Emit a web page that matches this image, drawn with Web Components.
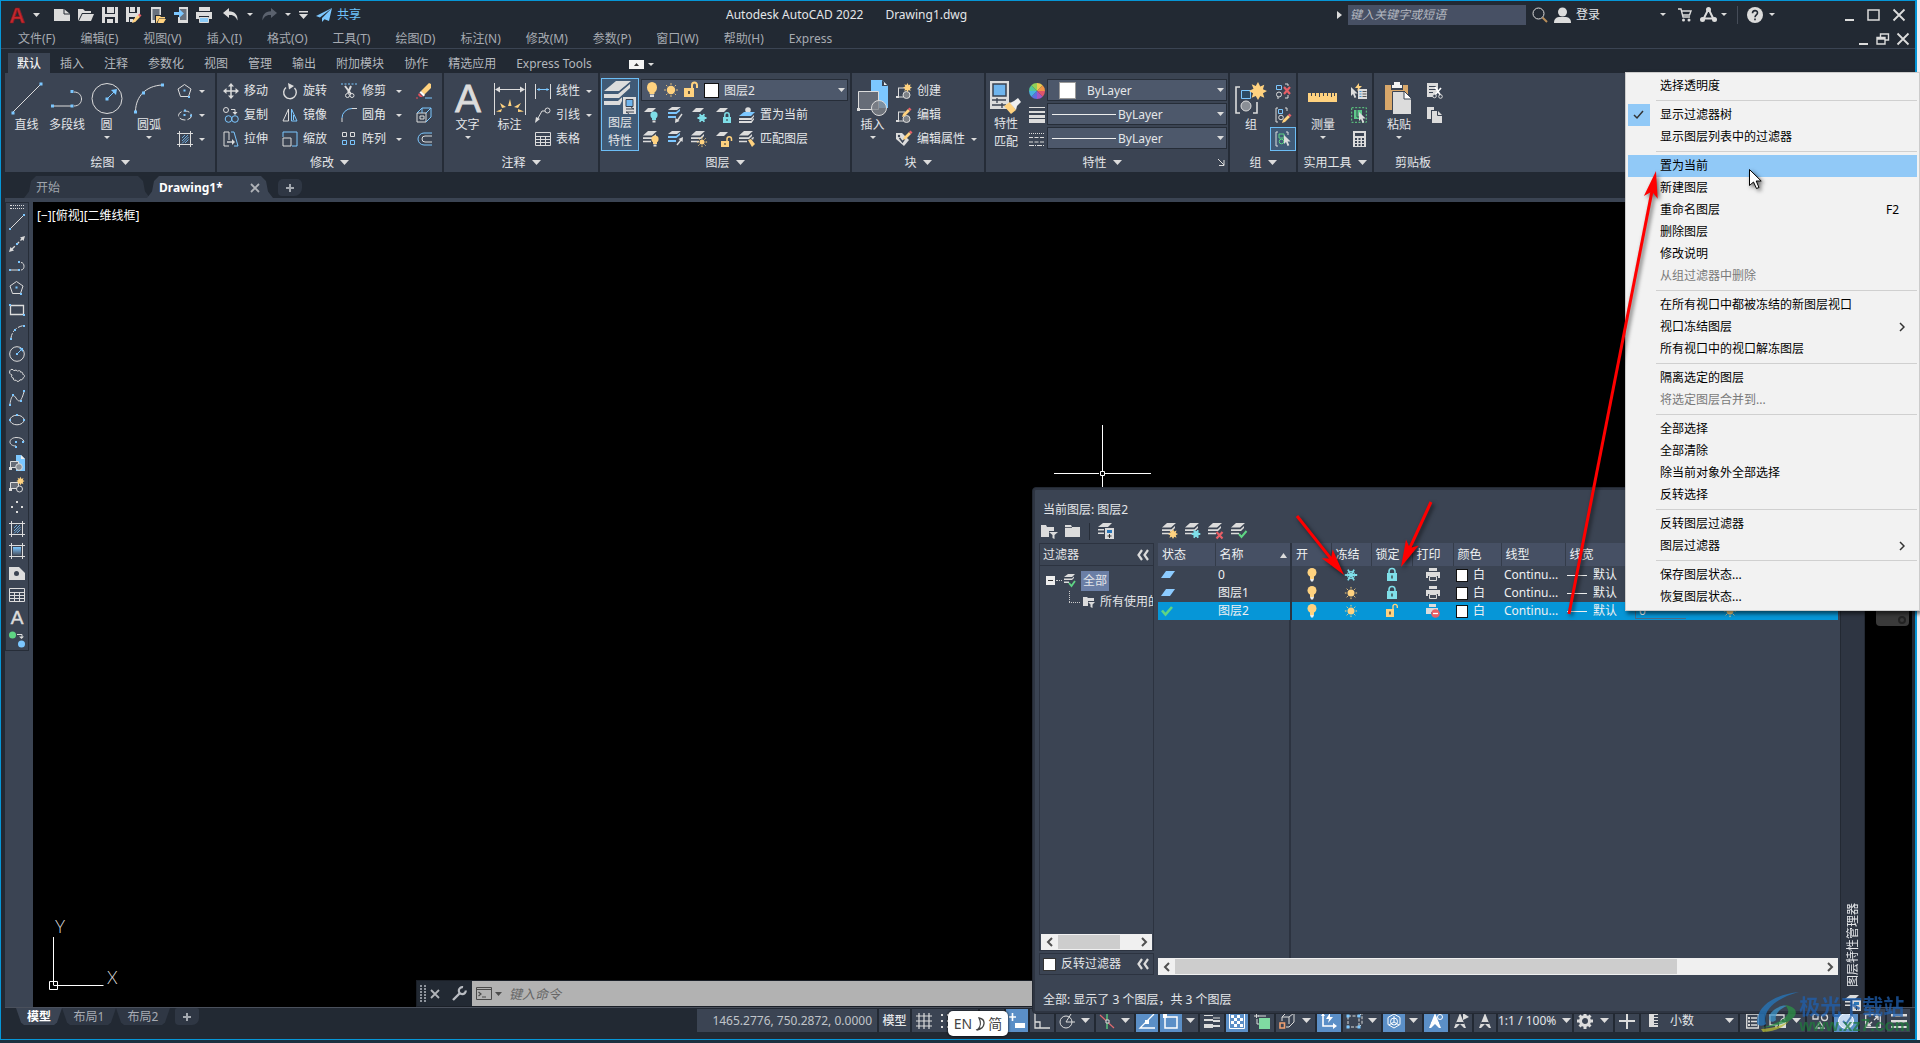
<!DOCTYPE html>
<html lang="zh-CN">
<head>
<meta charset="utf-8">
<title>Autodesk AutoCAD 2022 - Drawing1.dwg</title>
<style>
html,body{margin:0;height:100%}
body{
  --dark:#222933;--panel:#3b4453;--edge:#2a313d;--field:#4d586b;--blue:#0696d7;--accent:#7cc7ff;--on:#5b8fc7;--fg:#e4e6e9;--dim:#a7abb2;
  position:relative;overflow:hidden;background:#1d3040;color:var(--fg);
  font:12px/16px "Noto Sans","Noto Sans CJK SC",sans-serif;
}
</style>
</head>
<body>
<cad-app></cad-app>
<layer-palette></layer-palette>
<context-menu></context-menu>
<ime-badge></ime-badge>
<annotation-layer></annotation-layer>
<site-mark></site-mark>

<script>
const BASE = `:host,*{box-sizing:border-box}
button,input,select{font:inherit;color:inherit;background:none;border:0;padding:0;margin:0;outline:0;border-radius:0}
button{display:inline-flex;align-items:center;white-space:nowrap}
a{color:inherit;text-decoration:none}
select{appearance:none}`;

function define(name, css, html) {
  customElements.define(name, class extends HTMLElement {
    connectedCallback() {
      if (this.shadowRoot) return;
      const root = this.attachShadow({ mode: 'open' });
      root.innerHTML = `<style>${BASE}${css}</style>${html(this)}`;
    }
  });
}
const ic = (n, c = '') => `<cad-icon n="${n}"${c ? ` class="${c}"` : ''}></cad-icon>`;

/* ---------- icon set ---------- */
const stack = 'M5 0h9L9 4.500H0zM0 6.200h9.500L13 3v2L10 8H0zM0 9.700h8v1.600H0z';
const sq = (...p) => p.map(([x, y]) => `<rect class="B" x="${x - 1}" y="${y - 1}" width="2" height="2"/>`).join('');
const sq3 = (...p) => p.map(([x, y]) => `<rect class="B" x="${x - 1.5}" y="${y - 1.5}" width="3" height="3"/>`).join('');
const sunAt = (x, y, r) => `<circle class="Y" cx="${x}" cy="${y}" r="${r}"/><path class="y" d="${[0,45,90,135,180,225,270,315].map(a => { const c = Math.cos(a*Math.PI/180), s = Math.sin(a*Math.PI/180); return `M${(x+c*(r+1)).toFixed(1)} ${(y+s*(r+1)).toFixed(1)}L${(x+c*(r+2.6)).toFixed(1)} ${(y+s*(r+2.6)).toFixed(1)}`; }).join('')}"/>`;
const starAt = (x, y, r) => `<path class="Y" d="M${x} ${y-r}l${r*.25} ${r*.5} ${r*.45} ${-r*.2} ${-r*.15} ${r*.5} ${r*.45} ${r*.2} ${-r*.45} ${r*.25} ${r*.15} ${r*.5} ${-r*.45} ${-r*.2}L${x} ${y+r}l${-r*.25} ${-r*.45} ${-r*.45} ${r*.2} ${r*.15} ${-r*.5}L${x-r} ${y}l${r*.5} ${-r*.25} ${-r*.2} ${-r*.5} ${r*.45} ${r*.2}z"/>`;
const bulbAt = (x, y, c = 'Y') => `<circle class="${c}" cx="${x}" cy="${y}" r="3.6"/><path class="${c}" d="M${x-2} ${y+2}h4v3h-4z"/><path class="F" d="M${x-1.5} ${y+5.5}h3v2h-3z"/>`;
const flake = (x, y, r) => `<path class="c" stroke-width="1.800" d="M${x-r} ${y}h${2*r}M${x-r*.5} ${y-r*.87}l${r} ${r*1.74}M${x+r*.5} ${y-r*.87}l${-r} ${r*1.74}"/><circle class="c" cx="${x}" cy="${y}" r="${r*.6}"/>`;
const lockAt = (x, y, c = 'C', open = false) => `<path class="${c}" d="M${x} ${y+4}h8v6h-8z"/><path class="${c.toLowerCase()}" stroke-width="1.5" d="${open ? `M${x+6} ${y+4}v-2a2 2 0 0 1 4.500 0v2` : `M${x+1.8} ${y+4}v-2a2.200 2.200 0 0 1 4.400 0v2`}"/><path d="M${x+4} ${y+6}v2" stroke="#333"/>`;
const cursorAt = (x, y) => `<path class="F" d="M${x} ${y}v9l2-2 1.500 4 1.800-.8-1.700-3.800h3z"/>`;
const penAt = (x, y) => `<path class="Y" d="M${x} ${y+6}l5-5 2 2-5 5-3 1z"/><path class="R" d="M${x+5} ${y+1}l1.500-1.500 2 2L${x+7} ${y+3}z"/>`;
const I = {
  dd: [7,4,'<path class="F" d="M0 0h7L3.500 4z"/>'],
  dds: [6,3,'<path class="F" d="M0 0h6L3 3z"/>'],
  DD: [9,5,'<path class="F" d="M0 0h9L4.500 5z"/>'],
  tri: [5,8,'<path class="F" d="M0 0v8l5-4z"/>'],
  logo: [15,18,'<text x="-1" y="17" font-family="Liberation Sans" font-weight="700" font-size="22" fill="#c6282e" stroke="#7d1418" stroke-width=".6">A</text>'],
  new: [16,14,'<path class="F" d="M0 1h10l6 5v7H0z"/><path d="M10 1v5h6" stroke="#222933"/>'],
  open: [16,14,'<path class="F" d="M0 1h5l2 2h6v2H4L0 13z"/><path class="F" d="M4.500 6H16l-3 7H1z"/>'],
  save: [16,16,'<path class="F" d="M0 0h16v16H0z"/><path fill="#222933" stroke="none" d="M3 0h2v6h7V0h1v7H3zM3 10h10v6h-2v-4H9v4H3z"/><path class="F" d="M5 12h6v4H5z"/>'],
  saveas: [16,16,'<path class="F" d="M0 0h14v9l-5 6H0z"/><path fill="#222933" stroke="none" d="M3 0h8v6H3zM3 10h6v6H3z"/><path class="F" d="M4 0h5v5H4zM4 12h3v3H4z"/>'+penAt(7,7)],
  omob: [16,16,'<path class="F" d="M1 0h10v8H5v8H1z"/><path fill="#69717d" stroke="none" d="M2.500 2h7v6H5v5H2.500z"/><path class="Y" d="M6 9h4l1 1h4v1.500H9L6.500 16H6z"/><path class="Y" d="M9 12h7l-2.500 4H7.500z"/>'],
  smob: [14,16,'<path class="F" d="M5 0h9v16H4v-6h1zM5 0v3"/><path fill="#69717d" stroke="none" d="M6 2h6.500v11H6z"/><path class="B" d="M0 5h5V2l5 4.500-5 4.500V8H0z"/>'],
  print: [16,16,'<path class="F" d="M3 0h11v4H3zM0 5h16v7h-3v-3H3v3H0z"/><path fill="#8ccbf7" stroke="#dcdcdc" d="M3.500 10.500h9v5h-9z"/>'],
  undo: [16,13,'<path class="F" d="M6 0L0 5l6 5V7c5-.5 7 2 8.500 5.500C15 7 12 3.500 6 3.200z"/>'],
  redo: [16,13,'<path fill="#5a616d" stroke="none" d="M10 0l6 5-6 5V7c-5-.5-7 2-8.500 5.500C1 7 4 3.500 10 3.200z"/>'],
  more: [9,8,'<path class="F" d="M0 0h9v1.500H0zM0 3h9L4.500 8z"/>'],
  plane: [16,14,'<path class="B" d="M16 0L0 8l4 1.500zM16 0L6 10v4l2.500-2.800L13 13z"/>'],
  mag: [16,16,'<circle cx="6.500" cy="6.500" r="5.500" stroke="#dcdcdc"/><path stroke="#b88d5a" stroke-width="2" d="M10.500 10.500l4.500 4.500"/>'],
  user: [17,16,'<circle class="F" cx="8.500" cy="5" r="4.500"/><path class="F" d="M0 16c0-5 3-6 6-6h5c3 0 6 1 6 6z"/>'],
  cart: [14,14,'<path stroke-width="1.400" d="M0 1h3l2 8h7M4 3h9l-1.500 4H5"/><circle class="F" cx="5.500" cy="12" r="1.500"/><circle class="F" cx="11" cy="12" r="1.500"/>'],
  adsk: [17,15,'<path stroke-width="2" d="M8.500 2L3 13M8.500 2L14 13M3 11.500h11"/><circle class="F" cx="8.500" cy="2.500" r="2.500"/><circle class="F" cx="2.500" cy="12.500" r="2.500"/><circle class="F" cx="14.500" cy="12.500" r="2.500"/>'],
  help: [16,16,'<circle class="F" cx="8" cy="8" r="8"/><path stroke="#222933" stroke-width="1.600" d="M5.500 6.200C5.500 2.800 10.500 2.800 10.500 6c0 1.800-2.500 2-2.500 4.200M8 11.600v1.600"/>'],
  min: [10,14,'<path class="F" d="M0 11h9v2H0z"/>'],
  max: [13,12,'<path stroke-width="1.500" d="M1 1h11v10H1z"/>'],
  close: [14,14,'<path stroke-width="1.800" d="M1.500 1.500l11 11M12.500 1.500l-11 11"/>'],
  rest: [13,12,'<path stroke-width="1.400" d="M4.500 4V1h8v6h-3M1 4.500h8v6.500H1zM1 6h8"/>'],
  x: [10,10,'<path stroke="#b0b3b8" stroke-width="1.800" d="M1 1l8 8M9 1L1 9"/>'],
  plus: [10,10,'<path stroke="#a4a9b0" stroke-width="2" d="M5 1v8M1 5h8"/>'],
  mini: [15,9,'<path fill="#f4f4f4" stroke="none" d="M0 0h15v9H0z"/><path fill="#333" stroke="none" d="M5 6h5L7.500 3z"/>'],

  Line: [32,33,'<path d="M1.500 30.500l29-29"/>'+sq3([2,31],[30,2])],
  Pline: [32,33,'<path d="M2 24h19M23 10c10 0 10 14 0 14"/>'+sq3([1.5,24],[21,24],[21,9.500])],
  Circle: [32,33,'<circle cx="16" cy="16.500" r="15"/><path class="b" d="M16 17l8-8"/><path class="B" d="M26 7l-1 6-5-5z"/>'+sq3([16,17])],
  Arc: [32,33,'<path d="M2.500 29C3 14 13 4 29 3"/>'+sq3([2.5,30],[10.5,11],[29.500,3])],
  polygon: [16,16,'<path d="M7.500 1.500L14 6l-2.500 7.500H3.500L1 6z"/>'+sq([7.5,7.500],[12,14])],
  ellipse: [16,16,'<ellipse cx="8" cy="8.500" rx="6.500" ry="4.500" stroke-dasharray="6 2"/>'+sq([8,3.500],[14,8.500],[7.500,8])],
  hatch: [16,16,'<path d="M2.500 0v16M13.500 0v16M0 2.500h16M0 13.500h16"/><path class="b" stroke-width=".8" d="M5 7l3-3M5 10l6-6M5 12.500L11.500 6M8 12l3.500-3.500"/>'],
  move: [16,16,'<path stroke-width="1.500" d="M8 2v12M2 8h12"/><path class="F" d="M8 0l3 3.500H5zM8 16l3-3.500H5zM0 8l3.500-3v6zM16 8l-3.500-3v6z"/>'],
  rotate: [16,16,'<path stroke-width="1.400" d="M4 4.500A6.300 6.300 0 1 0 12.500 5"/><path class="F" d="M6 0l6 3-5 3.500z"/>'],
  trim: [16,16,'<path class="b" stroke-dasharray="2 1.500" d="M0 1h16"/><path stroke-width="2" d="M4 3l6 8M10 3L7 10"/><circle cx="6.500" cy="12.500" r="2"/><circle cx="11" cy="12.500" r="2"/>'],
  eraser: [16,16,'<path class="Y" d="M5 8l8-8 2 1v4l-7 7z"/><path fill="#fff" stroke="none" d="M5 8l4 4-1.500 1.500-4-4z"/><path fill="#e3505c" stroke="none" d="M3 10l4 4H4L2 12z"/><path class="b" d="M9 15h7"/><path stroke="#e3505c" d="M0 15h2"/>'],
  copy: [16,16,'<circle cx="3" cy="3" r="2.500"/><path d="M8 2.500h4v4"/><path class="F" d="M9.500 5h5L12 8z"/><circle class="b" cx="5.500" cy="12" r="3.300"/><circle class="b" cx="12" cy="12" r="3.300"/>'],
  mirror: [16,16,'<path d="M6.500 2v12H1z"/><path class="b" d="M9.500 2v12H15zM11.500 8v5"/>'],
  fillet: [16,16,'<path d="M1 15v-4M11 1.500h5"/><path class="b" d="M1 11A10 9.500 0 0 1 11 1.500"/>'],
  explode: [16,16,'<path d="M1 6h9v9H1zM4 9h4v3H4z"/><path class="b" d="M1 6l5-5h9l-5 5M15 1v9l-5 5M6 1v5M10 6l5-5"/>'],
  stretch: [16,16,'<path d="M6 15H1V1h5v8"/><path class="b" d="M8 1h3l4 14h-4"/><path stroke-width="1.400" d="M4 11h6"/><path class="F" d="M9 8l3 3-3 3z"/>'],
  scale: [16,16,'<path class="b" d="M1 6V1h14v14h-5"/><path d="M1 7h8v8H1z"/>'],
  array: [16,16,'<path d="M1.500 1.500h4v4h-4zM9.500 1.500h4v4h-4z"/><path class="b" d="M1.500 9.500h4v4h-4zM9.500 9.500h4v4h-4z"/>'],
  offset: [16,16,'<path class="b" d="M16 2H8a6 6 0 0 0 0 12h8"/><path d="M16 5H9a3 3 0 0 0 0 6h7"/>'],
  TextA: [28,33,'<text x="14" y="30" text-anchor="middle" font-family="Liberation Sans" font-size="39" fill="#dcdcdc" stroke="#dcdcdc" stroke-width=".8">A</text>'],
  Dim: [32,33,'<path d="M.5 1v32M31.500 1v32M2 7.500h28"/><path class="F" d="M1 7.500l5-3v6zM31 7.500l-5-3v6z"/><path class="Y" d="M14 24l2-7 1.500 7zM8 26l-2-5 6 4zM24 26l3-5-7 4zM7 30l-5-.5L8 27zM24 30l6-.5-6-2.500z"/>'],
  linear: [16,16,'<path d="M.5 1v15M15.500 1v15"/><path class="b" d="M2 6.500h12M4 5v3M12 5v3"/>'],
  leader: [16,16,'<circle cx="12.500" cy="3.500" r="2.500"/><path d="M10 4H7L2 13"/><path class="F" d="M0 16l1-6 4 2z"/>'],
  table: [16,16,'<path d="M.5 1.500h15v13H.5zM.5 5.500h15M.5 8.500h15M.5 11.500h15M5.500 5v10M10.500 5v10"/>'],
  LayerProp: [32,33,'<path class="F" d="M12 0h15L15 10H0zM0 13h14L26 3v4L15 17H0zM0 20h14l4-4v4l-2 4H0z"/><path stroke="#405a76" d="M0 11.500h14.500L26 2M0 18.500h14.500L22 12"/><path class="F" d="M19 16h13v17H19z"/><path fill="#6fb5ee" stroke="#3a4250" d="M22 18.500h7v7h-7z"/><path stroke="#3a4250" d="M22 28h8M27 26.500l3 1.500M22 31h8M22 31l3 1.500"/>'],
  bulb: [12,16,'<ellipse class="Y" cx="6" cy="5.500" rx="5" ry="5.500"/><path class="Y" d="M3.500 8h5v4h-5z"/><path class="F" d="M4 12.500h4v2.500H4z"/>'],
  sun: [16,16,sunAt(8,8,4.200)],
  unlock: [14,16,'<path class="Y" d="M0 6h10v9H0z"/><path class="y" stroke-width="2" d="M8 6V3a2.500 2.500 0 0 1 5 0v3"/><path stroke="#333" stroke-width="1.500" d="M5 9v3"/>'],
  lock: [12,14,'<path class="C" d="M1 5h10v8H1z"/><path class="c" stroke-width="1.600" d="M3 5V3.500a3 3 0 0 1 6 0V5"/><path stroke="#333" stroke-width="1.300" d="M6 7.500v3"/>'],
  unlocks: [12,14,'<path class="Y" d="M0 5h8v8H0z"/><path class="y" stroke-width="1.400" d="M7 5V2.500a2 2 0 0 1 4.300 0V4"/><path stroke="#333" stroke-width="1.300" d="M4 7.500v3"/>'],
  lOff: [16,16,'<path class="F" d="M5 1h8L9 5H1z"/>'+bulbAt(11,8,'C')],
  lIso: [16,16,`<path class="F" d="M5 0h9l-4 3H1z"/><path class="B" d="M1 5h8l4-3v2L9.500 7H1z"/><path class="B" d="M1 9h8v2H1z"/><path stroke-width="1.400" d="M15 7l-5 7"/><path class="F" d="M8 16l.5-5 4 3z"/>`],
  lFrz: [16,16,'<path class="F" d="M5 1h8L9 5H1z"/>'+flake(11,11,4.500)],
  lLock: [16,16,'<path class="F" d="M5 1h8L9 5H1z"/>'+lockAt(8,6)],
  lCur: [17,16,'<circle class="F" cx="9" cy="3" r="2.800"/><path class="B" d="M5 5h11l-4 4H0z"/><path class="F" d="M0 11h12l3-3v1.500L12.500 13H0zM0 14h12l3-3v1.500L12.500 16H0z"/>'],
  lOn: [16,16,`<path class="F" d="${stack}"/>`+bulbAt(12,8)],
  lUni: [16,16,`<path class="F" d="M5 0h9l-4 3H1z"/><path class="B" d="M1 5h8l4-3v2L9.500 7H1z"/><path class="B" d="M1 9h8v2H1z"/><path stroke-width="1.400" d="M10 14l4-5"/><path class="F" d="M16 6l-.5 5-4-3z"/>`],
  lThaw: [16,16,`<path class="F" d="${stack}"/>`+sunAt(11,11,2.500)],
  lUnl: [16,16,'<path class="F" d="M5 1h8L9 5H1z"/>'+lockAt(6,6,'Y',true)],
  lMatch: [16,16,`<path class="F" d="${stack}"/><path class="Y" d="M9 9l3-1 4 5-3 3z"/><path class="F" d="M12 7l3-1-1 3z"/>`],
  lNew: [16,16,`<path class="F" d="${stack}"/>`+starAt(11,11,5)],
  lVp: [16,16,`<path class="F" d="${stack}"/>`+flake(11,11,4.300)],
  lDel: [16,16,`<path class="F" d="${stack}"/><path stroke="#e85f66" stroke-width="2.200" d="M8.500 9l6 6.500M14.500 9l-6 6.500"/>`],
  lSet: [16,16,`<path class="F" d="${stack}"/><path class="g" stroke-width="2" d="M8 11l2.500 3 5-6"/>`],
  Insert: [32,36,'<path class="B" d="M14 0h11l6 6v22H14z"/><path fill="#3b4453" stroke="none" d="M25 0v6h6z"/><path fill="#eee" stroke="none" d="M27 2v3h3z"/><path fill="#666c77" stroke="#dcdcdc" d="M1.500 11.500h20v18h-20z"/><circle fill="#7d8187" fill-opacity=".8" cx="22" cy="28" r="7.500"/>'+'<path class="F" d="M0 28h3v3H0z"/>'],
  create: [16,16,'<path d="M2 5h7M2.500 5v9h5"/><circle fill="#7d8187" cx="10.500" cy="12" r="3.500"/><path class="F" d="M0 13h3v2H0z"/>'+starAt(11.5,4.500,4.500)],
  editb: [16,16,'<path d="M2 5h7M2.500 5v9h5"/><circle fill="#7d8187" cx="10.500" cy="12" r="3.500"/><path class="F" d="M0 13h3v2H0z"/>'+penAt(7,1)],
  attr: [16,16,'<path class="F" d="M0 2h6l7 7-5 6L0 8z"/><circle fill="#3b4453" stroke="none" cx="3" cy="5" r="1.200"/><path stroke="#3b4453" stroke-width="1.500" d="M3.500 7l3 4 4-6"/>'+penAt(8,0)],
  MatchProp: [32,33,'<path class="F" d="M0 0h19v28H0z"/><path fill="#6fb5ee" stroke="#3a4250" stroke-width="1.500" d="M3 3h13v12H3z"/><path stroke="#3a4250" stroke-width="1.300" d="M2 19h14M7 17v5M2 24h14M12 22v5"/><path class="Y" d="M14 25l6-4 6 8-5 4z"/><path fill="#eee" stroke="none" d="M20 22l4-2 4-3 3 4-4 4-1 4z"/>'],
  wheel: [16,16,'<g stroke="none"><path fill="#e9c84f" d="M8 8V0a8 8 0 0 1 5.700 2.300z"/><path fill="#ef9447" d="M8 8l5.700-5.700A8 8 0 0 1 16 8z"/><path fill="#e0556a" d="M8 8h8a8 8 0 0 1-2.300 5.700z"/><path fill="#a456c4" d="M8 8l5.700 5.700A8 8 0 0 1 8 16z"/><path fill="#5d6fe0" d="M8 8v8a8 8 0 0 1-5.700-2.300z"/><path fill="#48b0e0" d="M8 8l-5.700 5.700A8 8 0 0 1 0 8z"/><path fill="#53c796" d="M8 8H0a8 8 0 0 1 2.300-5.700z"/><path fill="#8fd057" d="M8 8L2.300 2.300A8 8 0 0 1 8 0z"/></g>'],
  lws: [16,16,'<path class="F" d="M0 0h16v1H0zM0 4h16v2H0zM0 8h16v3H0zM0 12h16v4H0z"/>'],
  lts: [16,16,'<path d="M0 2.500h16" stroke-dasharray="1 1"/><path d="M0 6.500h16M0 11h16" stroke-dasharray="4 1.500"/><path d="M0 14.500h16" stroke-dasharray="5 1 1 1"/>'],
  launch: [7,7,'<path d="M0 0l6 6M6 1v5.500H1"/>'],
  Group: [32,33,'<path stroke-width="1.600" d="M5 5H1v26h4M18 31h4V20"/><path class="b" d="M6.500 8.500h9v8h-9z" fill="#2d4a63"/><circle fill="#8a8f96" cx="11" cy="24" r="5"/>'+starAt(23,9,9)],
  ungrp: [16,16,'<path d="M10 1h3v2M10 15h3v-3M4 15H2"/><path class="b" d="M1.500 2.500h5v4h-5z"/><circle cx="4" cy="11.500" r="2.500"/><path stroke="#e85f66" stroke-width="2.200" d="M9 4l6 7M15 4l-6 7"/>'],
  grped: [16,16,'<path d="M3 1H1v14h2M10 1h2v3"/><path class="b" d="M3.500 2.500h4v4h-4z"/><circle cx="6" cy="10.500" r="2.300"/>'+penAt(8,7)],
  grpsel: [16,16,'<path d="M3 1H1v14h2M11 1h2v3"/><path class="g" d="M4 3h5v4H4z"/><circle class="g" cx="6.500" cy="10.500" r="2.300"/>'+cursorAt(9,4)],
  Measure: [30,10,'<path class="Y" d="M0 0h29v9H0z"/><path stroke="#3b4453" d="M3.500 0v3M7.500 0v3M11.500 0v4M15.500 0v3M19.500 0v3M23.500 0v4M26.500 0v3"/>'],
  qsel: [16,16,'<path class="F" d="M7 6h9v10H7z"/><path stroke="#3f8fd0" d="M8.500 8.500h2M8.500 11h2M8.500 13.500h2"/><path stroke="#555" d="M11.500 8.500h4M11.500 11h4M11.500 13.500h4"/><path class="Y" d="M8 0L4 5h3L6 8l5-5H8z"/>'+cursorAt(0,4)],
  selall: [16,16,'<path class="g" stroke-dasharray="2 1.500" d="M.7.7h14.600v14.600H.7z"/><path fill="#5ec98a" stroke="none" d="M3 3h8v9H3z"/><path stroke="#3b4453" d="M6 3v7h6"/>'+cursorAt(8,5)],
  calc: [13,16,'<path class="F" d="M0 0h13v16H0z"/><path fill="#3b4453" stroke="none" d="M2 2h9v3H2zM2 7h2v2H2zM5.500 7h2v2h-2zM9 7h2v2H9zM2 10h2v2H2zM5.500 10h2v2h-2zM9 10h2v2H9zM2 13h2v2H2zM5.500 13h2v2h-2zM9 13h2v2H9z"/>'],
  Paste: [28,33,'<path fill="#d8a76a" stroke="none" d="M0 3h23v25H0z"/><path fill="#3b4453" stroke="none" d="M6 2h12v6H6z"/><path fill="#f4f4f4" stroke="none" d="M7 3h2V0h6v3h2v3H7z"/><path fill="#dcdcdc" stroke="#3b4453" d="M7.500 9.500h12l7 7v16h-19z"/><path fill="#fff" stroke="#3b4453" d="M19 9l8 8h-8z"/>'],
  cut: [16,16,'<path class="F" d="M0 0h11v7l-4 7H0z"/><path stroke="#3b4453" d="M2 3.500h7M2 6.500h7M2 9.500h4"/><path stroke-width="1.600" stroke="#fff" d="M8 4l6 9M14 5l-7 8"/><circle fill="#3b4453" cx="7.500" cy="13" r="1.800"/><circle fill="#3b4453" cx="13.500" cy="13.500" r="1.800"/>'],
  copyc: [16,16,'<path class="F" d="M0 0h7v3H4v9H0z"/><path class="F" d="M5 4h6l4 4v8H5z"/><path stroke="#3b4453" d="M10.500 4v4.500H15"/>'],

  pLine: [16,16,'<path d="M2 14L14 2"/>'+sq([1,15],[15,1])],
  pXl: [16,16,'<path stroke-width="1.300" d="M3 13L13 3" stroke-dasharray="4 2"/><path class="F" d="M0 16l1.500-5 3.500 3.500zM16 0l-5 1.500L14.500 5z"/>'+sq([8,8])],
  pPl: [16,16,'<path d="M2 12h8M12 4.500c4 0 4 7.500 0 7.500"/>'+sq([1,12],[10,12],[10,4])],
  pRect: [16,16,'<path stroke-width="1.300" d="M1.500 3.500h13v9h-13z"/>'+sq([1,3],[15,13])],
  pArc: [16,16,'<path d="M2 14C3 7 8 2.500 15 1.500" stroke-dasharray="5 1.500"/>'+sq([2,15],[6,6],[15,2])],
  pCir: [16,16,'<circle cx="8" cy="8" r="7.300"/><path class="b" d="M9 7l4-4"/><path class="B" d="M14 2v4l-4-4z"/>'+sq([8,8])],
  pCloud: [16,16,'<path d="M1 2.500C2 .8 4 1 5 2.800 6 1.800 8 2 8.500 3.200 10 2.200 11.800 2.600 11.600 4.200 13.500 3.800 14 5 13.600 6.200 16 6.500 16 9.500 14 9.800 14 11.600 12.500 12.200 11 11.800 10.500 13.800 7.800 14 7 12.200 5 12.800 3.800 11.500 4.400 10 2.300 9.800 1.800 8 3.200 7 .8 6.500 0 4.500 1 2.500z"/>'],
  pSpl: [16,16,'<path d="M1 14c1-7 3-11 6-6s5 4 8-6"/>'+sq([1,15],[4,5],[12,11],[15,1])],
  pEl: [16,16,'<ellipse cx="8" cy="8" rx="7" ry="4.800"/>'+sq([8,3],[1,8],[15,8])],
  pElA: [16,16,'<path d="M7 12C-1 12-1 4 7 3.500c4 0 7 1 8 4"/>'+sq([7,8],[14,8],[7,13])],
  pIns: [16,16,'<path class="B" d="M7 0h5l4 4v12H7z"/><path fill="#eee" stroke="none" d="M12 0v4h4z"/><path fill="#666c77" d="M1.500 6.500h8v6h-8z"/><circle fill="#8a8f96" cx="10" cy="12" r="3.300"/><path class="F" d="M0 12h3v3H0z"/>'],
  pBlk: [16,16,'<path fill="#666c77" d="M1.500 5.500h8v6h-8z"/><circle fill="#3b4453" cx="10.500" cy="12" r="3"/><path class="F" d="M0 11h3v3H0z"/>'+starAt(11.5,4,4.200)],
  pPt: [16,16,'<path class="F" d="M7 2h2v2H7zM2 7h2v2H2zM12 7h2v2h-2zM7 12h2v2H7z"/>'],
  pGrad: [16,16,'<defs><linearGradient id="g" x1="0" y1="0" x2="0" y2="1"><stop offset="0" stop-color="#7cc7ff"/><stop offset="1" stop-color="#4a5464"/></linearGradient></defs><path d="M2.500 0v16M13.500 0v16M0 2.500h16M0 13.500h16"/><path fill="url(#g)" stroke="none" d="M4 4h8v8H4z"/>'],
  pReg: [16,14,'<path class="F" d="M0 1h10l6 6v7H0z"/><circle fill="#3b4453" stroke="none" cx="7.500" cy="7.500" r="2.500"/>'],
  pTxt: [16,16,'<text x="8" y="15" text-anchor="middle" font-family="Liberation Sans" font-size="19" fill="#dcdcdc" stroke="#dcdcdc" stroke-width=".5">A</text>'],
  pAdd: [16,16,'<circle fill="#5fd584" stroke="none" cx="3.500" cy="4" r="3.500"/><circle class="B" cx="12.500" cy="13" r="3.500"/><path d="M8 3.500h5v3"/><path class="F" d="M10 5.500h5L12.500 8z"/>'],

  fNewP: [17,16,'<path class="F" d="M0 2h5l1 2h7v4H8v6H0z"/><path class="F" d="M8 9h9l-3.500 3v4l-2-1v-3z"/>'],
  fGrp: [16,14,'<path class="F" d="M0 1h6l1 2h8v10H0z"/><path stroke="#3b4453" stroke-width=".8" d="M0 3.500h7"/>'],
  fSt: [16,16,'<path class="F" d="M5 0h9l-4 4H0zM0 6h6v1.500H0zM0 9.500h6V11H0z"/><path class="F" d="M7 5h9v11H7z"/><path fill="#2b77b8" stroke="none" d="M9 7h5v3H9z"/><path stroke="#333" d="M9.500 13h4M11.500 11v4"/>'],
  dbl: [12,10,'<path stroke-width="2.200" d="M5 0L1.500 5 5 10M11 0L7.500 5 11 10"/>'],
  minus: [9,9,'<path fill="#eee" stroke="none" d="M0 0h9v9H0z"/><path stroke="#333" d="M2 4.500h5"/>'],
  tLay: [12,14,'<path class="F" d="M4 0h7L8 3H0zM0 4.500h8l2-2V4L8 6H0zM0 7.500h5V9H0z"/><path class="g" stroke-width="1.800" d="M5 9l2.500 3L11 7"/>'],
  tFil: [12,12,'<path class="F" d="M0 1h4l1 1h6v3H5v5H0z"/><path class="F" d="M5 6h7L9.500 8.500V12l-2-1V8.500z"/>'],
  elbow: [12,21,'<path stroke="#ccc" stroke-dasharray="1 1" d="M.5 0v11M0 11.500h12"/>'],
  sheet: [14,8,'<path fill="#8ccbff" stroke="none" d="M5 0h9L9 7H0z"/>'],
  chk: [12,10,'<path class="g" stroke-width="2.600" d="M1 4.500L4.500 8.500 11 1"/>'],
  cbulb: [10,14,'<circle class="Y" cx="5" cy="4.500" r="4.500"/><path class="Y" d="M3 7h4v4H3z"/><path fill="#eee" stroke="none" d="M3 11h4l-1 2.500H4z"/>'],
  csun: [14,14,sunAt(7,7,3.500)],
  cfrz: [14,14,flake(7,7,6.200)],
  cprn: [14,14,'<path class="F" d="M3 0h8v3H3zM0 4h14v6h-2V8H2v2H0z"/><path fill="#444c59" stroke="#dcdcdc" d="M3.500 8.500h7v4h-7z"/>'],
  cnop: [14,14,'<path class="F" d="M3 0h7v3H3zM0 4h12v4H5v2H0z"/><circle fill="#e85f66" stroke="none" cx="9.500" cy="9.500" r="4.300"/><path stroke="#fff" stroke-width="1.300" d="M7 9.500h5"/>'],
  up: [7,5,'<path class="F" d="M0 5h7L3.500 0z"/>'],
  sL: [8,10,'<path stroke="#505050" stroke-width="2" d="M6 1L2 5l4 4"/>'],
  sR: [8,10,'<path stroke="#505050" stroke-width="2" d="M2 1l4 4-4 4"/>'],
  grip: [6,18,'<path stroke="#8f949c" stroke-width="2" stroke-dasharray="2 1" d="M1 0v18M5 0v18"/>'],
  wrench: [15,15,'<path stroke="#b9bcc2" stroke-width="2.400" d="M1 14l7-7"/><path stroke="#b9bcc2" stroke-width="2.200" d="M11 1.200A3.500 3.500 0 1 0 13.800 4.500"/>'],
  term: [16,13,'<path stroke="#4a4a4a" d="M.5.5h15v12H.5zM.5 2.500h15"/><path stroke="#4a4a4a" stroke-width="1.200" d="M2.500 5l2.500 2-2.500 2M6 10h4"/>'],

  sGrid: [16,16,'<path stroke-width="1.200" d="M3 0v16M8 0v16M13 0v16M0 3h16M0 8h16M0 13h16"/>'],
  sSnap: [16,16,'<path stroke-width="2" stroke-dasharray="2 4" d="M1 1v16M7 1v16M13 1v16"/>'],
  sDyn: [16,16,'<path stroke="#fff" stroke-width="1.600" d="M0 4h7M3.500 0v8"/><path fill="#fff" stroke="none" d="M6 10h10v5H6z"/>'],
  sOrt: [16,16,'<path stroke-width="1.300" d="M1 0v15h15M1 9h5v6"/>'],
  sPol: [16,16,'<circle cx="7" cy="9" r="6"/><path d="M7 9h9M7 9l5-8"/>'],
  sIso: [16,16,'<path stroke="#e06b70" stroke-width="1.200" d="M1 2l14 13"/><path class="g" stroke-width="1.300" d="M8 0v16"/><path fill="#3b4453" d="M7 7h3v3H7z"/>'],
  sOtr: [16,16,'<path stroke="#fff" stroke-width="1.300" d="M15 1L1 15h15"/><path fill="#fff" stroke="none" d="M6 7h4v4H6z"/>'],
  sOsn: [16,16,'<path stroke="#fff" stroke-width="1.500" d="M2 4h12v11H2z"/><path fill="#fff" stroke="none" d="M0 1h4v4H0z"/>'],
  sLw: [16,16,'<path d="M0 2.500h9M9 5h7"/><path class="F" d="M0 6h9v2H0zM9 7h7v2H9zM0 11h9v4H0zM9 12h7v2H9z"/>'],
  sTr: [16,16,'<path stroke="#fff" d="M.5.5h15v15H.5z"/><path fill="#fff" stroke="none" d="M2 2h3v3H2zM8 2h3v3H8zM5 5h3v3H5zM11 5h3v3h-3zM2 8h3v3H2zM8 8h3v3H8zM5 11h3v3H5zM11 11h3v3h-3z"/>'],
  sCyc: [16,16,'<path d="M0 3h5M2.500 1v4M3 6v5h3M4 3h8"/><path fill="#7fdba2" stroke="none" d="M5 5h11v11H5z"/>'],
  s3d: [16,16,'<path d="M3 8V4l4-4h8v9l-5 5H7M3 4h7v7M10 4l5-4"/><path stroke="#f0a070" stroke-width="1.600" d="M1 10h4.500v5H1z"/>'],
  sUcs: [16,16,'<path stroke="#fff" stroke-width="1.600" d="M2 1v12h11"/><path fill="#fff" stroke="none" d="M2 0L0 3h4zM16 13l-4-3v6z"/><path fill="#fff" stroke="none" d="M9 0L5 6h3L7 10l5-6H9z"/>'],
  sFil: [16,16,'<path stroke-dasharray="3 1.500" d="M2 3h11v11H2zM13 3l3-3M13 14l3-3V1"/>'+sq3([2,3],[13,3],[2,14],[13,14])],
  sGiz: [16,16,'<path stroke="#fff" d="M8 1l6 3.500v7L8 15l-6-3.500v-7z"/><path stroke="#fff" d="M8 3v6M8 9l-5 3M8 9l5 3"/><circle stroke="#fff" cx="8" cy="8.500" r="3.500"/>'],
  sAn1: [16,16,'<path fill="#fff" stroke="none" d="M7 0L1 15h2l4-4 4 4h2L9 5z"/><path stroke="#fff" d="M3 10l4-3 4 3"/><circle stroke="#fff" cx="12" cy="4" r="2.500"/>'],
  sAn2: [16,16,'<path class="F" d="M7 0L1 15h2l4-4 4 4h2L9 5zM3 9h8v2H3zM10 0l6 4-6 3z"/>'],
  sAn3: [16,16,'<path class="F" d="M8 0L2 15h2l4-4 4 4h2L10 5zM4 9h8v2H4z"/>'],
  sGear: [16,16,'<circle cx="8" cy="8" r="4.500" stroke-width="3"/><path stroke-width="3" d="M8 0v3M8 13v3M0 8h3M13 8h3M2.500 2.500l2 2M11.500 11.500l2 2M13.500 2.500l-2 2M4.500 11.500l-2 2"/>'],
  sPlus: [16,16,'<path stroke-width="2" d="M8 0v16M0 8h16"/>'],
  sUnit: [9,16,'<path class="F" d="M0 0h9v2H5v1h4v1H5v2h4v1H5v2h4v1H5v2h4v1H5v1h4v2H0z"/>'],
  sQp: [13,16,'<path stroke-width="1.300" d="M.7 1h11.600v14H.7zM5 5h6M5 8.500h6M5 12h6"/><path class="F" d="M2 4h2v2H2zM2 7.500h2v2H2zM2 11h2v2H2z"/>'],
  sLui: [17,16,'<path stroke-width="1.300" d="M9 12H1V2h14v4M7 12v3"/><path class="F" d="M10 9h7v6h-7z"/><path d="M12 9V7.500a2 2 0 0 1 4 0"/>'],
  sIsoO: [16,16,'<path stroke-width="1.300" d="M1 1h5v5H1zM8 9l4 6H4z"/><circle stroke-width="1.300" cx="12.500" cy="4.500" r="3"/>'],
  sHw: [16,16,'<circle fill="#c7daf0" stroke="#fff" cx="8" cy="8" r="7.500"/><path stroke="#4d7fb5" stroke-width="2" d="M5 8l3 3 5-7"/>'],
  sFull: [16,14,'<path stroke-width="1.300" d="M.7.7h14.600v12.600H.7zM9 6l4-3.500M10 2.500h3V6M7 8l-4 3.500M6 11.500H3V8"/>'],
  sMenu: [16,14,'<path class="F" d="M0 0h16v2.500H0zM0 6h16v2.500H0zM0 12h16v2H0z"/>']
};
define('cad-icon', `:host{display:inline-flex;flex:none}svg{display:block;fill:none;stroke:#dcdcdc;overflow:visible}
.F{fill:#dcdcdc;stroke:none}.B{fill:#7cc7ff;stroke:none}.Y{fill:#ffd27f;stroke:none}.C{fill:#7fdfe9;stroke:none}.R{fill:#e85f66;stroke:none}
.b{stroke:#7cc7ff}.y{stroke:#ffd27f}.c{stroke:#7fdfe9}.g{stroke:#5fd584}`, e => {
  const [w, h, s] = I[e.getAttribute('n')];
  return `<svg width="${w}" height="${h}" viewBox="0 0 ${w} ${h}" aria-hidden="true">${s}</svg>`;
});

/* ---------- title bar ---------- */
define('title-bar', `:host{display:flex;height:27px;align-items:center;padding-right:9px}
.quick{display:flex;align-items:center;width:725px;padding-left:9px;gap:8px}
.quick .new{margin-left:6px}.quick .undo{margin-left:3px}.share{color:#6fc3fa;gap:5px}
.t{margin-right:22px;white-space:nowrap}
.right{display:flex;align-items:center;margin-left:auto}
.search{width:178px;height:20px;background:#475064;padding-left:2px;margin:0 6px;font-style:italic}
.search::placeholder{color:#b4b8c0;opacity:1}
.login{gap:5px;margin-left:6px}.a{margin-left:60px}.b{margin-left:12px}.c{margin:0 4px 0 8px}
.sep{width:1px;height:18px;background:#454c58;margin:0 9px 0 10px}.d{margin-left:6px}
.win{display:flex;gap:12px;align-items:center;margin-left:70px}`,
() => `<div class="quick"><button aria-label="应用程序菜单">${ic('logo')}</button>${ic('dd')}
<button class="new" aria-label="新建">${ic('new')}</button><button aria-label="打开">${ic('open')}</button><button aria-label="保存">${ic('save')}</button><button aria-label="另存为">${ic('saveas')}</button><button aria-label="从移动设备打开">${ic('omob')}</button><button aria-label="保存到移动设备">${ic('smob')}</button><button aria-label="打印">${ic('print')}</button>
<button class="undo" aria-label="放弃">${ic('undo')}</button>${ic('dds')}<button aria-label="重做">${ic('redo')}</button>${ic('dds')}<button aria-label="自定义">${ic('more')}</button><button class="share">${ic('plane')}<span>共享</span></button></div>
<span class="t">Autodesk AutoCAD 2022</span><span class="t">Drawing1.dwg</span>
<div class="right">${ic('tri')}<input class="search" aria-label="搜索" placeholder="键入关键字或短语"><button aria-label="查找">${ic('mag')}</button>
<button class="login">${ic('user')}<span>登录</span></button>${ic('dds','a')}<button class="b" aria-label="商店">${ic('cart')}</button><button class="c" aria-label="应用">${ic('adsk')}</button>${ic('dds')}<span class="sep"></span><button aria-label="帮助">${ic('help')}</button>${ic('dds','d')}
<div class="win"><button aria-label="最小化">${ic('min')}</button><button aria-label="最大化">${ic('max')}</button><button aria-label="关闭">${ic('close')}</button></div></div>`);

define('menu-bar', `:host{display:flex;height:21px;align-items:center;padding:1px 5px 0 4px;border-bottom:1px solid #3b4453;color:var(--dim)}
nav{display:flex}a{padding:0 12px 0 13px}.win{margin-left:auto;display:flex;gap:7px;align-items:center}`,
() => `<nav>${['文件(F)','编辑(E)','视图(V)','插入(I)','格式(O)','工具(T)','绘图(D)','标注(N)','修改(M)','参数(P)','窗口(W)','帮助(H)','Express'].map(t => `<a href="#">${t}</a>`).join('')}</nav>
<div class="win"><button aria-label="最小化图形">${ic('min')}</button><button aria-label="还原图形">${ic('rest')}</button><button aria-label="关闭图形">${ic('close')}</button></div>`);

define('ribbon-tabs', `:host{display:flex;height:24px;align-items:flex-end;padding-left:7px;color:#b3b7bd}
button{height:20px;padding:2px 10px 0}.on{background:var(--panel);color:#f2f2f2;font-weight:500;padding:2px 9px 0}.m{gap:4px;padding-left:27px}`,
() => ['默认','插入','注释','参数化','视图','管理','输出','附加模块','协作','精选应用','Express Tools'].map((t, i) => `<button${i ? '' : ' class="on"'}>${t}</button>`).join('') + `<button class="m" aria-label="最小化功能区">${ic('mini')}${ic('dds')}</button>`);

/* ---------- ribbon ---------- */
define('ribbon-panel', `:host{display:flex;flex-direction:column;border-right:2px solid #252c37;height:99px}
.body{display:flex;height:79px;padding-top:6px}footer{display:flex;align-items:center;justify-content:center;gap:6px;height:20px;padding-top:1px}
footer .l{margin-left:auto;margin-right:3px}.off{margin-left:auto}`,
e => `<div class="body"><slot></slot></div><footer>${e.hasAttribute('launcher') ? '<span class="off"></span>' : ''}<span>${e.getAttribute('label')}</span>${e.hasAttribute('plain') ? '' : ic('DD')}${e.hasAttribute('launcher') ? ic('launch','l') : ''}</footer>`);

define('big-button', `:host{display:block;flex:none}button{flex-direction:column;width:100%;height:72px;padding-top:1px}
.i{height:36px;display:flex;align-items:center}
.t{line-height:18px}cad-icon.dd{margin-top:2px}
:host([active]) button{background:#405a76;border:1px solid #6cbdf5;height:73px;margin-top:-1px}`,
e => `<button><span class="i">${ic(e.getAttribute('icon'))}</span>${e.getAttribute('label').split('|').map(t => `<span class="t">${t}</span>`).join('')}${e.hasAttribute('arrow') ? ic('dds','dd') : ''}</button>`);

define('tool-button', `:host{display:flex;height:24px;align-items:center}button{gap:5px;height:22px;min-width:16px}
.i{width:16px;display:flex;justify-content:center}cad-icon.dd{margin-left:10px}:host([tight]) cad-icon.dd{margin-left:6px}
:host([active]) button{background:#405a76;outline:1px solid #6cbdf5;padding:0 4px;margin:0 -4px}`,
e => `<button aria-label="${e.getAttribute('label') || e.getAttribute('icon')}"><span class="i">${ic(e.getAttribute('icon'))}</span>${e.hasAttribute('label') ? `<span>${e.getAttribute('label')}</span>` : ''}</button>${e.hasAttribute('arrow') ? ic('dds','dd') : ''}`);

define('combo-box', `:host{display:flex;height:22px;margin-bottom:2px;background:var(--field);border:1px solid #262d38;align-items:center;padding:0 2px 0 4px}
select{flex:1;height:20px;min-width:0;padding-top:1px}`,
e => `<slot></slot><select aria-label="${e.getAttribute('name')}"><option>${e.getAttribute('value')}</option></select>${ic('dd')}`);

const tool = (i, l, x = '') => `<tool-button icon="${i}"${l ? ` label="${l}"` : ''} ${x}></tool-button>`;
define('cad-ribbon', `:host{display:flex;background:var(--panel);margin-left:4px;height:99px}
.c{display:grid;grid-auto-rows:24px;align-content:start}.mod{grid-template-columns:59px 59px 75px 16px;padding-left:6px}
.lay{display:flex;flex-direction:column;padding-left:2px}.row{display:flex;gap:8px;padding-left:2px;height:24px}
.swatch{width:15px;height:15px;background:#fff;border:1px solid #111;margin:0 5px 0 6px}.layer{display:flex;align-items:center;gap:5px}
.sw{width:17px;height:17px;background:#fff;border:1px solid #999;margin:0 11px 0 7px}.ln{width:64px;height:1px;background:#eee;margin-right:2px}
.combos{display:flex;flex-direction:column;width:180px}`,
() => `
<ribbon-panel label="绘图" style="width:212px"><big-button icon="Line" label="直线" style="width:43px"></big-button><big-button icon="Pline" label="多段线" style="width:38px"></big-button><big-button icon="Circle" label="圆" arrow style="width:41px"></big-button><big-button icon="Arc" label="圆弧" arrow style="width:44px"></big-button>
<div class="c" style="padding-left:6px">${tool('polygon','','arrow tight')}${tool('ellipse','','arrow tight')}${tool('hatch','','arrow tight')}</div></ribbon-panel>
<ribbon-panel label="修改" style="width:227px"><div class="c mod">${tool('move','移动')}${tool('rotate','旋转')}${tool('trim','修剪','arrow')}${tool('eraser')}${tool('copy','复制')}${tool('mirror','镜像')}${tool('fillet','圆角','arrow')}${tool('explode')}${tool('stretch','拉伸')}${tool('scale','缩放')}${tool('array','阵列','arrow')}${tool('offset')}</div></ribbon-panel>
<ribbon-panel label="注释" style="width:156px"><big-button icon="TextA" label="文字" arrow style="width:47px"></big-button><big-button icon="Dim" label="标注" style="width:37px"></big-button><div class="c" style="padding-left:7px">${tool('linear','线性','arrow tight')}${tool('leader','引线','arrow tight')}${tool('table','表格')}</div></ribbon-panel>
<ribbon-panel label="图层" style="width:252px"><big-button icon="LayerProp" label="图层|特性" active style="width:38px;margin-left:1px"></big-button>
<div class="lay"><combo-box name="图层" value="图层2" style="width:207px"><span class="layer">${ic('bulb')}${ic('sun')}${ic('unlock')}</span><span class="swatch"></span></combo-box>
<div class="row">${tool('lOff')}${tool('lIso')}${tool('lFrz')}${tool('lLock')}${tool('lCur','置为当前')}</div><div class="row">${tool('lOn')}${tool('lUni')}${tool('lThaw')}${tool('lUnl')}${tool('lMatch','匹配图层')}</div></div></ribbon-panel>
<ribbon-panel label="块" style="width:134px"><big-button icon="Insert" label="插入" arrow style="width:41px"></big-button><div class="c" style="padding-left:3px">${tool('create','创建')}${tool('editb','编辑')}${tool('attr','编辑属性','arrow tight')}</div></ribbon-panel>
<ribbon-panel label="特性" launcher style="width:244px"><big-button icon="MatchProp" label="特性|匹配" style="width:40px"></big-button><div class="c" style="padding:0 2px 0 3px">${tool('wheel')}${tool('lws')}${tool('lts')}</div>
<div class="combos"><combo-box name="对象颜色" value="ByLayer"><span class="sw"></span></combo-box><combo-box name="线宽" value="ByLayer"><span class="ln"></span></combo-box><combo-box name="线型" value="ByLayer"><span class="ln"></span></combo-box></div></ribbon-panel>
<ribbon-panel label="组" style="width:68px"><big-button icon="Group" label="组" style="width:42px"></big-button><div class="c" style="padding-left:3px">${tool('ungrp')}${tool('grped')}${tool('grpsel','','active')}</div></ribbon-panel>
<ribbon-panel label="实用工具" style="width:76px"><big-button icon="Measure" label="测量" arrow style="width:50px"></big-button><div class="c" style="padding-left:3px">${tool('qsel')}${tool('selall')}${tool('calc')}</div></ribbon-panel>
<ribbon-panel label="剪贴板" plain style="width:78px;border:0"><big-button icon="Paste" label="粘贴" arrow style="width:50px"></big-button><div class="c" style="padding-left:3px">${tool('cut')}${tool('copyc')}</div></ribbon-panel>`);

define('file-tabs', `:host{display:flex;height:30px;align-items:flex-end;padding-left:19px;border-bottom:4px solid var(--panel);margin-left:4px}
button{height:22px}.t{justify-content:space-between;width:126px;padding:1px 12px 0;background:#2f3744;color:#a0a5ad;clip-path:polygon(0 100%,5px 70%,7px 5px,12px 0,114px 0,119px 5px,121px 70%,100% 100%)}
.on{background:var(--panel);color:#fff;font-weight:700;margin-left:-3px;padding-right:13px}
.p{width:24px;justify-content:center;background:#2f3744;border-radius:5px 5px 8px 4px;margin-left:5px;height:17px;margin-bottom:2px}`,
() => `<button class="t">开始</button><button class="t on"><span>Drawing1*</span>${ic('x')}</button><button class="p" aria-label="新图形">${ic('plus')}</button>`);

/* ---------- work area ---------- */
define('draw-toolbar', `:host{display:flex;flex-direction:column;align-items:center;width:24px;height:449px;border:1px solid #262d38;padding-top:2px}
.g{width:14px;height:4px;border-top:1px dotted #ddd;border-bottom:1px dotted #ddd;margin-bottom:2px}button{height:22px}`,
() => '<span class="g"></span>' + 'pLine pXl pPl polygon pRect pArc pCir pCloud pSpl pEl pElA pIns pBlk pPt hatch pGrad pReg table pTxt pAdd'.split(' ').map(n => `<button aria-label="${n}">${ic(n)}</button>`).join(''));

define('command-line', `:host{display:flex;height:27px;background:var(--dark);border:1px solid #1a1f27;align-items:center;padding-left:3px}
.x{margin:0 12px 0 4px}.w{margin-right:5px}.f{flex:1;display:flex;height:25px;background:#b2b2b2;align-items:center;gap:3px;padding-left:4px}
cad-icon.k{filter:brightness(.35)}input{flex:1;height:25px;padding-left:4px;font-size:13px;font-style:italic;color:#555}input::placeholder{color:#666;opacity:1}`,
() => `${ic('grip')}<button class="x" aria-label="关闭命令行">${ic('x')}</button><button class="w" aria-label="自定义">${ic('wrench')}</button><div class="f">${ic('term')}${ic('dd','k')}<input aria-label="命令" placeholder="键入命令"></div>`);

define('model-space', `:host{display:block;flex:1;position:relative;background:#000;overflow:hidden}
.v{padding:6px 4px;color:#fff}svg{position:absolute;stroke:#fff;fill:none}
.cross{left:1021px;top:222px}.ucs{left:16px;bottom:12px}.nav{position:absolute;right:3px;top:60px;width:33px;height:364px;background:#3a3a3a;border-radius:4px}
.nav i{position:absolute;right:3px;bottom:2px;width:8px;height:8px;border:2px solid #222;border-radius:50%}
command-line{position:absolute;left:383px;bottom:0;width:620px}text{fill:#ddd;stroke:none;font:300 17px/20px Lato,sans-serif}`,
() => `<div class="v">[−][俯视][二维线框]</div><div class="nav"><i></i></div>
<svg class="cross" width="98" height="100"><path d="M0 49.500h45M50 49.500h47M48.500 1v46M48.500 52v46M46.500 47.500h4v4h-4z"/></svg>
<svg class="ucs" width="80" height="84"><path d="M4.500 26v48M4.500 74.500h50M.5 70.500h8v8h-8z"/><text x="6" y="22">Y</text><text x="58" y="73">X</text></svg>
<command-line></command-line>`);

define('work-area', `:host{display:flex;flex:1;min-height:0;margin:0 3px 0 4px;background:var(--panel)}model-space{margin-left:4px}`,
() => `<draw-toolbar></draw-toolbar><model-space></model-space>`);

/* ---------- bottom bar ---------- */
define('layout-tabs', `:host{display:flex;padding-left:11px;height:18px}
button{height:17px;width:54px;justify-content:center;background:#2f3744;color:#a7acb4;clip-path:polygon(0 0,100% 0,calc(100% - 5px) 85%,calc(100% - 8px) 100%,8px 100%,5px 85%)}
.on{width:46px;background:var(--panel);color:#fff;font-weight:700}.p{width:24px;margin-left:5px;clip-path:none;border-radius:2px 2px 7px 4px}`,
() => `<button class="on">模型</button><button>布局1</button><button>布局2</button><button class="p" aria-label="新建布局">${ic('plus')}</button>`);

const g = (w, ...parts) => `<div class="g" style="width:${w}px">${parts.join('')}</div>`;
const s = n => `<button class="i" aria-label="${n}">${ic(n)}</button>`, on = n => `<button class="i on" aria-label="${n}">${ic(n)}</button>`, ar = `<span class="ar">${ic('DD')}</span>`;
define('status-bar', `:host{display:flex;gap:2px;margin-left:auto;padding:1px 5px 0 0;height:24px}
.g{display:flex;height:23px;background:var(--panel);align-items:center;white-space:nowrap}
.i{flex:1;height:23px;justify-content:center}.on{background:var(--on)}.i.on{flex:0 0 auto;min-width:22px}.i.on:only-child{flex:1}.ar{width:17px;flex:none;display:flex;justify-content:center}
.co{justify-content:flex-end;padding-right:5px;color:#c0c4ca}.m{flex:1;height:23px;justify-content:center;font-weight:500}
select{flex:1;min-width:0}.u{margin:0 12px 0 8px}.z + .ar{width:11px}.none{width:17px}`,
() => `<div class="g co" style="width:180px">1465.2776, 750.2872, 0.0000</div>` +
 g(31,'<button class="m">模型</button>') + g(66,s('sGrid'),s('sSnap'),'<span class="none"></span>') + g(24,s('sDyn')) + g(22,on('sDyn')) + g(24,s('sOrt')) + g(38,s('sPol'),ar) + g(38,s('sIso'),ar) + g(22,on('sOtr')) + g(38,on('sOsn'),ar) + g(24,s('sLw')) + g(22,on('sTr')) + g(24,s('sCyc')) + g(39,s('s3d'),ar) + g(24,on('sUcs')) + g(38,s('sFil'),ar) + g(39,on('sGiz'),ar) + g(24,on('sAn1')) + g(22,s('sAn2')) + g(22,s('sAn3')) +
 g(74,'<select class="z" aria-label="注释比例"><option>1:1 / 100%</option></select>',ar) + g(39,s('sGear'),ar) + g(24,s('sPlus')) + g(97,`<span class="u">${ic('sUnit')}</span><select aria-label="单位"><option>小数</option></select>`,ar) + g(24,s('sQp')) + g(39,s('sLui'),ar) + g(25,s('sIsoO')) + g(24,on('sHw')) + g(25,s('sFull')) + g(23,s('sMenu')));

define('cad-app', `:host{display:flex;flex-direction:column;height:calc(100vh - 3px);margin-right:3px;background:var(--dark);border:1px solid var(--blue);border-right-width:2px;box-shadow:3px 0 0 #eceef2;min-height:700px}
.foot{display:flex;height:32px;border-top:1px solid #4a505c;margin-left:4px}`,
() => `<title-bar></title-bar><menu-bar></menu-bar><ribbon-tabs></ribbon-tabs><cad-ribbon></cad-ribbon><file-tabs></file-tabs><work-area></work-area><div class="foot"><layout-tabs></layout-tabs><status-bar></status-bar></div>`);

/* ---------- layer palette ---------- */
define('scroll-bar', `:host{display:flex;height:17px;background:#f0f0f0;align-items:center}button{width:17px;height:100%;justify-content:center;flex:none}
.t{height:calc(100% - 2px);background:#cdcdcd}.r{margin-left:auto}`,
e => `<button aria-label="向左滚动">${ic('sL')}</button><span class="t" style="width:${e.getAttribute('thumb')}"></span><button class="r" aria-label="向右滚动">${ic('sR')}</button>`);

const COLS = [['状态',57],['名称',76],['开',40],['冻结',40],['锁定',41],['打印',41],['颜色',48],['线型',64],['线宽',69],['',52],['',152]];
const layerRow = (r) => `<tr${r.cur ? ' class="cur"' : ''}><td>${ic(r.cur ? 'chk' : 'sheet')}</td><td class="name">${r.n}</td><td class="m">${ic('cbulb')}</td><td class="m">${ic(r.f)}</td><td class="m">${ic(r.l)}</td><td class="m">${ic(r.p)}</td><td><span class="col"><i class="sw"></i>白</span></td><td>Continu...</td><td><span class="col"><i class="ln"></i>默认</span></td><td class="tr">${r.cur ? '<input aria-label="透明度" value="0">' : ''}</td><td class="vp">${r.cur ? ic('csun') : ''}</td></tr>`;
define('layer-palette', `:host{position:absolute;left:1032px;top:487px;width:833px;height:527px;display:flex;background:var(--panel);border:1px solid #232933;border-radius:4px;box-shadow:inset 0 0 0 2px #2e3542;padding:1px 0 2px 6px}
.main{flex:1;display:flex;flex-direction:column;padding-right:2px;min-width:0}.cap{margin:11px 0 0 4px;line-height:20px}
.bar{display:flex;align-items:center;height:22px;gap:7px;padding-left:2px;margin-bottom:1px}.bar .sp{width:1px;height:17px;background:#262d38;margin:0 1px}.bar .r{margin-left:41px}
.body{display:flex;height:432px;gap:4px;flex:none}
.left{width:115px;display:flex;flex-direction:column}.hd{display:flex;align-items:center;justify-content:space-between;height:23px;border:1px solid #2c3340;padding:0 4px 0 3px;flex:none}
.tree{flex:1;border:1px solid #2c3340;border-top:0;display:flex;flex-direction:column;padding:4px 1px 0;overflow:hidden}
.n{display:flex;align-items:center;height:21px;padding-left:5px;white-space:nowrap}.n .d{width:6px;border-top:1px dotted #ccc;margin:0 2px 0 1px}
.sel{background:#6b7fa6;margin-left:5px;padding:2px}.k{padding-left:28px;gap:2px}.k span{margin-left:3px}
.tree scroll-bar{margin-top:auto;height:16px}
.inv{display:flex;align-items:center;height:22px;margin-top:2px;border:1px solid #2c3340;padding:0 4px 0 3px;gap:5px}.inv button{margin-left:auto}
input[type=checkbox]{appearance:none;width:13px;height:13px;background:#fff;border:1px solid #333}
.list{flex:1;display:flex;flex-direction:column;min-width:0}.fill{flex:1;background:linear-gradient(#2c3340,#2c3340) 131px 0/2px 100% no-repeat}
table{border-collapse:collapse;table-layout:fixed;width:680px;color:#eef0f2}th{height:23px;background:#465064;font-weight:400;text-align:left;padding:0 0 0 4px;border-right:1px solid #343c4a}
th:nth-child(2){border-right:2px solid #2c3340}th:nth-child(2) cad-icon{float:right;margin:6px 3px 0 0}
td{height:18px;padding:0 0 0 3px;line-height:16px;overflow:hidden;white-space:nowrap}td.name{border-right:2px solid #2c3340}td.m{padding:0}td cad-icon{display:flex}td.m cad-icon{justify-content:center}
.cur{background:#0696d7}.col{display:flex;align-items:center;gap:5px}.sw{width:12px;height:13px;background:#fff;border:1px solid #111}.ln{width:20px;height:1px;background:#eee;margin:0 1px 0 -1px}
td.tr{padding:0 0 0 1px}.tr input{width:52px;height:16px;border:1px solid #4a6c86;padding-left:3px;display:block;color:#fff}td.vp{padding-left:37px}
.foot{margin-top:17px;padding-left:4px}
.strip{width:24px;background:#2e3542;border-left:1px solid #232933;display:flex;flex-direction:column;align-items:center;justify-content:flex-end}
.v{writing-mode:vertical-rl;text-orientation:sideways;transform:rotate(180deg);margin-bottom:8px;white-space:nowrap;line-height:20px}`,
() => `<div class="main"><div class="cap">当前图层: 图层2</div>
<div class="bar">${ic('fNewP')}${ic('fGrp')}<span class="sp"></span>${ic('fSt')}${ic('lNew','r')}${ic('lVp')}${ic('lDel')}${ic('lSet')}</div>
<div class="body"><div class="left"><div class="hd">过滤器${ic('dbl')}</div><div class="tree"><div class="n">${ic('minus')}<i class="d"></i>${ic('tLay')}<span class="sel">全部</span></div><div class="n k">${ic('elbow')}${ic('tFil')}<span>所有使用的图层</span></div><scroll-bar thumb="62px"></scroll-bar></div>
<div class="inv"><input type="checkbox" id="inv"><label for="inv">反转过滤器</label><button aria-label="收拢">${ic('dbl')}</button></div></div>
<div class="list"><table><colgroup>${COLS.map(c => `<col style="width:${c[1]}px">`).join('')}</colgroup><thead><tr>${COLS.map((c, i) => `<th scope="col">${c[0]}${i === 1 ? ic('up') : ''}</th>`).join('')}</tr></thead><tbody>
${[{n:'0',f:'cfrz',l:'lock',p:'cprn'},{n:'图层1',f:'csun',l:'lock',p:'cprn'},{n:'图层2',f:'csun',l:'unlocks',p:'cnop',cur:1}].map(layerRow).join('')}</tbody></table><div class="fill"></div><scroll-bar thumb="502px"></scroll-bar></div></div>
<div class="foot">全部: 显示了 3 个图层，共 3 个图层</div></div><div class="strip"><span class="v">图层特性管理器</span>${ic('fSt')}</div>`);

/* ---------- context menu ---------- */
const MENU = ['选择透明度','-','*显示过滤器树','显示图层列表中的过滤器','-','!置为当前','新建图层','重命名图层|F2','删除图层','修改说明','~从组过滤器中删除','-','在所有视口中都被冻结的新图层视口','视口冻结图层|>','所有视口中的视口解冻图层','-','隔离选定的图层','~将选定图层合并到...','-','全部选择','全部清除','除当前对象外全部选择','反转选择','-','反转图层过滤器','图层过滤器|>','-','保存图层状态...','恢复图层状态...'];
define('context-menu', `:host{position:absolute;right:0;top:72px;width:295px;background:#f2f2f2;border:1px solid #ccc;padding:2px;color:#000;box-shadow:2px 3px 4px #0008}
button{display:flex;width:100%;height:22px;text-align:left}.c{width:22px;height:22px;display:flex;align-items:center;justify-content:center;margin-right:10px}
hr{height:1px;border:0;background:#d0d0d0;margin:3px 0 3px 28px}.on{background:#91c9f7}.c.t{background:#91c9f7}.off{color:#7a7a7a}
.k{margin-left:auto;margin-right:18px}svg{fill:none;stroke:#333;stroke-width:1.500}.k svg{margin-right:-13px;display:block}`,
() => MENU.map(m => {
  if (m === '-') return '<hr>';
  const f = '*!~'.includes(m[0]) ? m[0] : '', [t, k] = m.slice(f ? 1 : 0).split('|');
  return `<button${f === '!' ? ' class="on"' : f === '~' ? ' class="off"' : ''}><span class="c${f === '*' ? ' t' : ''}">${f === '*' ? '<svg width="12" height="10"><path d="M1 5l3 3 6-7"/></svg>' : ''}</span>${t}${k ? `<span class="k">${k === '>' ? '<svg width="6" height="10"><path d="M1 1l4 4-4 4"/></svg>' : k}</span>` : ''}</button>`;
}).join(''));

define('ime-badge', `:host{position:absolute;left:948px;bottom:7px;height:25px;width:60px;display:flex;align-items:center;justify-content:center;gap:3px;background:#fff;color:#444;border-radius:5px;box-shadow:0 0 3px #000;font-size:14px}svg{fill:none;stroke:#444;stroke-width:1.300}`,
() => `<span>EN</span><svg width="10" height="14"><path d="M4 1c7 1 7 10-2 12 4-3 4-8 2-12zM1 13l5-2"/></svg><span>简</span>`);

/* ---------- red pointers and mouse cursor drawn over the window ---------- */
const arrow = (x1, y1, x2, y2) => {
  const L = Math.hypot(x2-x1, y2-y1), u = (x2-x1)/L, v = (y2-y1)/L, p = (d, w) => `${(x2-u*d-v*w).toFixed(1)} ${(y2-v*d+u*w).toFixed(1)}`;
  return `<path d="M${x1} ${y1}L${p(20,0)}" stroke="#f00" stroke-width="3"/><path fill="#f00" d="M${p(0,0)}L${p(27,7)}L${p(21,0)}L${p(27,-7)}z"/>`;
};
define('annotation-layer', `:host{position:absolute;left:0;top:0;pointer-events:none}svg{display:block;filter:drop-shadow(2px 2px 2px #0009)}`,
() => `<svg width="1910" height="640">${arrow(1297,516,1344,575)}${arrow(1431,502,1401,567)}${arrow(1569,614,1656,171)}<path fill="#fff" stroke="#000" d="M1749.500 169.500v16l4-3.500 3 6.500 2.500-1-2.800-6.500h5z"/></svg>`);

define('site-mark', `:host{position:absolute;right:10px;bottom:9px;display:flex;opacity:.75;pointer-events:none}
.t{display:flex;flex-direction:column;color:#1f5fae;font:700 21px/26px "Noto Sans CJK SC",sans-serif}.u{color:#1f7a3c;font:700 17px/16px "Liberation Sans",sans-serif}`,
() => `<svg width="44" height="42" viewBox="0 0 44 42"><path fill="#2577bd" d="M44 0C18 3 2 14 2 31c2 4 6 3 9 1-4-14 10-26 33-32z"/><path fill="#3b94c9" d="M14 26c0-8 14-14 18-12-6 2-13 8-11 14-3 3-7 2-7-2z"/><path fill="#2d9146" d="M30 13c12 2 13 8 8 13S22 34 6 36c16-4 25-9 27-15 1-3-1-6-3-8z"/><path fill="#b6ba35" d="M6 37c12-1 20-3 28-8-6 7-14 10-26 11z"/></svg><div class="t"><span>极光下载站</span><span class="u">www.xz7.com</span></div>`);
</script>
</body>
</html>
